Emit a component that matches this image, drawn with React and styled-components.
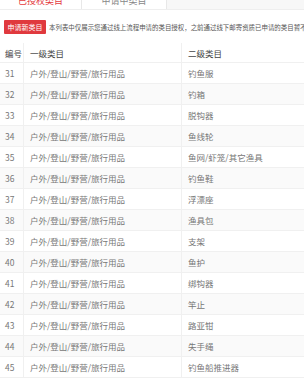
import React from 'react';
import styled, { createGlobalStyle } from 'styled-components';

const ROWS = [
    [31, '钓鱼服'],
    [32, '钓箱'],
    [33, '脱钩器'],
    [34, '鱼线轮'],
    [35, '鱼网/虾笼/其它渔具'],
    [36, '钓鱼鞋'],
    [37, '浮漂座'],
    [38, '渔具包'],
    [39, '支架'],
    [40, '鱼护'],
    [41, '绑钩器'],
    [42, '竿止'],
    [43, '路亚钳'],
    [44, '失手绳'],
    [45, '钓鱼船推进器'],
];

const FIRST = '户外/登山/野营/旅行用品';

const GlobalStyle = createGlobalStyle`
    *, *::before, *::after {
        box-sizing: border-box;
    }
    html, body {
        margin: 0;
        padding: 0;
        background: #fff;
        overflow: hidden;
    }
    body {
        font-family: "Noto Sans CJK SC", "Noto Sans", sans-serif;
        font-size: 8.5px;
        color: #666;
    }
`;

const Page = styled.div`
    width: 304px;
    height: 385px;
    overflow: hidden;
`;

const TabBar = styled.div`
    display: flex;
    height: 10px;
    background: #f7f7f7;
    border-bottom: 1px solid #eee;
    overflow: hidden;
`;

const Tab = styled.div`
    width: ${(p) => (p.$active ? 82 : 85)}px;
    margin-top: -6px;
    line-height: 14px;
    text-align: center;
    font-size: 9px;
    background: #fff;
    border-right: 1px solid #e8e8e8;
    color: ${(p) => (p.$active ? '#e4393c' : '#888')};
`;

const Notice = styled.div`
    display: flex;
    align-items: center;
    gap: 3px;
    padding: 10px 0 9px 4px;
    white-space: nowrap;
`;

const ApplyButton = styled.button`
    flex: none;
    width: 42px;
    height: 14px;
    padding: 0;
    border: none;
    border-radius: 1px;
    background: #e0393e;
    color: #fff;
    font-family: inherit;
    font-size: 7px;
`;

const NoticeText = styled.span`
    font-size: 6.45px;
    color: #555;
`;

const Table = styled.div`
    width: 380px;
`;

const Row = styled.div`
    display: grid;
    grid-template-columns: 24px 158px 1fr;
    height: ${(p) => (p.$head ? 20 : 21)}px;
    align-items: stretch;
    border-bottom: 1px solid #f0f0f0;
    background: ${(p) => (p.$shade ? '#fafafa' : '#fff')};
    color: ${(p) => (p.$head ? '#444' : '#777')};
`;

const Cell = styled.div`
    display: flex;
    align-items: center;
    padding-left: ${(p) => (p.$first ? 5 : 6)}px;
    border-right: ${(p) => (p.$last ? 'none' : '1px solid #f0f0f0')};
    white-space: nowrap;
`;

const App = () => {
    return (
        <Page>
            <GlobalStyle />
            <TabBar>
                <Tab $active>已授权类目</Tab>
                <Tab>申请中类目</Tab>
            </TabBar>
            <Notice>
                <ApplyButton>申请新类目</ApplyButton>
                <NoticeText>
                    本列表中仅展示您通过线上流程申请的类目授权，之前通过线下邮寄资质已申请的类目暂不展示
                </NoticeText>
            </Notice>
            <Table>
                <Row $head>
                    <Cell $first>编号</Cell>
                    <Cell>一级类目</Cell>
                    <Cell $last>二级类目</Cell>
                </Row>
                {ROWS.map(([id, name], i) => (
                    <Row key={id} $shade={i % 2 === 1}>
                        <Cell $first>{id}</Cell>
                        <Cell>{FIRST}</Cell>
                        <Cell $last>{name}</Cell>
                    </Row>
                ))}
            </Table>
        </Page>
    );
};

export default App;
